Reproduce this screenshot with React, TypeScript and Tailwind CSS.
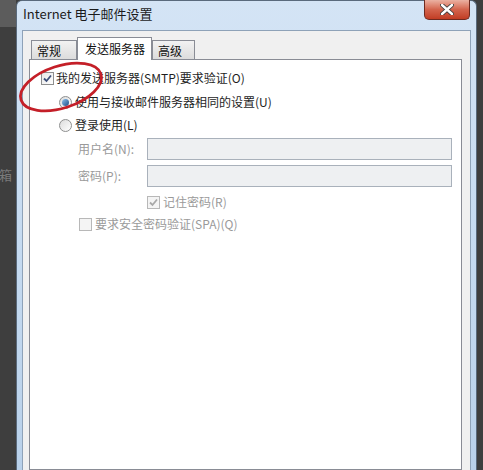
import React from 'react';

const font = { fontFamily: '"Noto Sans CJK SC", "Noto Sans", sans-serif' };

function CheckBox({ checked, disabled }: { checked?: boolean; disabled?: boolean }) {
  return (
    <span
      className={`inline-flex h-[13px] w-[13px] shrink-0 items-center justify-center border ${
        disabled ? 'border-[#b8b8b8] bg-[#f4f4f4]' : 'border-[#8e8f8f] bg-gradient-to-br from-[#e6e6e6] to-white'
      }`}
    >
      {checked && (
        <svg width="9" height="9" viewBox="0 0 9 9">
          <path
            d="M1 4.5 L3.5 7 L8 1.5"
            fill="none"
            stroke={disabled ? '#a8a8a8' : '#3c4f7a'}
            strokeWidth="1.8"
          />
        </svg>
      )}
    </span>
  );
}

function Radio({ checked }: { checked?: boolean }) {
  return (
    <span className="inline-flex h-[13px] w-[13px] shrink-0 items-center justify-center rounded-full border border-[#8e8f8f] bg-gradient-to-br from-[#dcdcdc] to-white">
      {checked && <span className="h-[7px] w-[7px] rounded-full bg-gradient-to-br from-[#8fc2ee] to-[#1d4f87]" />}
    </span>
  );
}

// tabs: fixed widths so the strip lines up with the dialog
function Tab({ label, active, width }: { label: string; active?: boolean; width: string }) {
  return (
    <div
      className={
        active
          ? `relative z-10 -mb-px flex h-[23px] ${width} items-start border border-b-0 border-[#898c95] bg-white pl-[7px] pt-[2px] text-[12px] text-[#111]`
          : `flex h-[19px] ${width} items-start border border-b-0 border-[#898c95] bg-gradient-to-b from-[#f2f2f2] to-[#dcdcdc] pl-[5px] pt-px text-[12px] text-[#111]`
      }
    >
      {label}
    </div>
  );
}

export default function App() {
  return (
    <div className="relative h-[470px] w-[483px] overflow-hidden bg-[#3e3e3e]" style={font}>
      <div className="flex h-full">
        <div className="flex w-[16px] flex-col">
          <div className="h-[27px] bg-[#5c5c5c]" />
          <div className="mt-[141px] text-[13px] leading-none text-[#7a7a7a] -ml-[1px]">箱</div>
        </div>
        <div className="flex w-[461px] flex-col rounded-t-[6px] border-x border-t border-[#5a6a7c] bg-gradient-to-b from-[#d4e4f5] via-[#c6dbf1] to-[#b9d1ea]">
          <div className="flex h-[29px] items-start justify-between pl-[6px] pr-[6px]">
            <span className="mt-[6px] text-[13px] leading-none text-[#1b1b1b]">Internet 电子邮件设置</span>
            <div className="flex h-[20px] w-[46px] -mt-px items-center justify-center rounded-b-[5px] border border-t-0 border-[#6e2a20] bg-gradient-to-b from-[#eab1a2] via-[#d3644d] to-[#c13c23]">
              <svg width="14" height="11" viewBox="0 0 14 11">
                <path d="M2 1 L12 10 M12 1 L2 10" stroke="#3a3a3a" strokeWidth="4.2" strokeLinecap="round" />
                <path d="M2 1 L12 10 M12 1 L2 10" stroke="#ffffff" strokeWidth="2.4" strokeLinecap="round" />
              </svg>
            </div>
          </div>
          <div className="mx-[5px] flex flex-1 flex-col border border-b-0 border-[#8ea2b8] bg-[#f0f0f0] pl-[6px] pr-[8px] pt-[6px]">
            <div className="flex items-end pl-[2px] leading-[17px]">
              <Tab label="常规" width="w-[46px]" />
              <Tab label="发送服务器" width="w-[75px]" active />
              <Tab label="高级" width="w-[43px]" />
            </div>
            <div className="flex-1 border border-[#898c95] bg-white pl-[11px] text-[12px] leading-[14px] text-[#1e1e1e]">
              <div className="mt-[11px] flex items-center gap-[1px]">
                <CheckBox checked />
                <span className="ml-[1px]">我的发送服务器(SMTP)要求验证(O)</span>
              </div>
              <div className="mt-[10px] flex items-center gap-[3px] pl-[18px]">
                <Radio checked />
                <span>使用与接收邮件服务器相同的设置(U)</span>
              </div>
              <div className="mt-[9px] flex items-center gap-[3px] pl-[18px]">
                <Radio />
                <span>登录使用(L)</span>
              </div>
              <div className="mt-[6px] flex items-center pl-[37px] pr-[9px] text-[#9a9a9a]">
                <span className="w-[69px]">用户名(N):</span>
                <div className="h-[22px] flex-1 border border-[#a9b1bb] bg-[#eef0f2]" />
              </div>
              <div className="mt-[5px] flex items-center pl-[37px] pr-[9px] text-[#9a9a9a]">
                <span className="w-[69px]">密码(P):</span>
                <div className="h-[22px] flex-1 border border-[#a9b1bb] bg-[#eef0f2]" />
              </div>
              <div className="mt-[8px] flex items-center gap-[3px] pl-[106px] text-[#9a9a9a]">
                <CheckBox checked disabled />
                <span>记住密码(R)</span>
              </div>
              <div className="mt-[8px] flex items-center gap-[3px] pl-[38px] text-[#9a9a9a]">
                <CheckBox disabled />
                <span>要求安全密码验证(SPA)(Q)</span>
              </div>
            </div>
          </div>
        </div>
      </div>
      <svg className="pointer-events-none absolute left-0 top-0" width="483" height="470">
        <ellipse
          cx="61"
          cy="87"
          rx="42"
          ry="21"
          transform="rotate(-18 61 87)"
          fill="none"
          stroke="#c41f28"
          strokeWidth="2.8"
        />
      </svg>
    </div>
  );
}
